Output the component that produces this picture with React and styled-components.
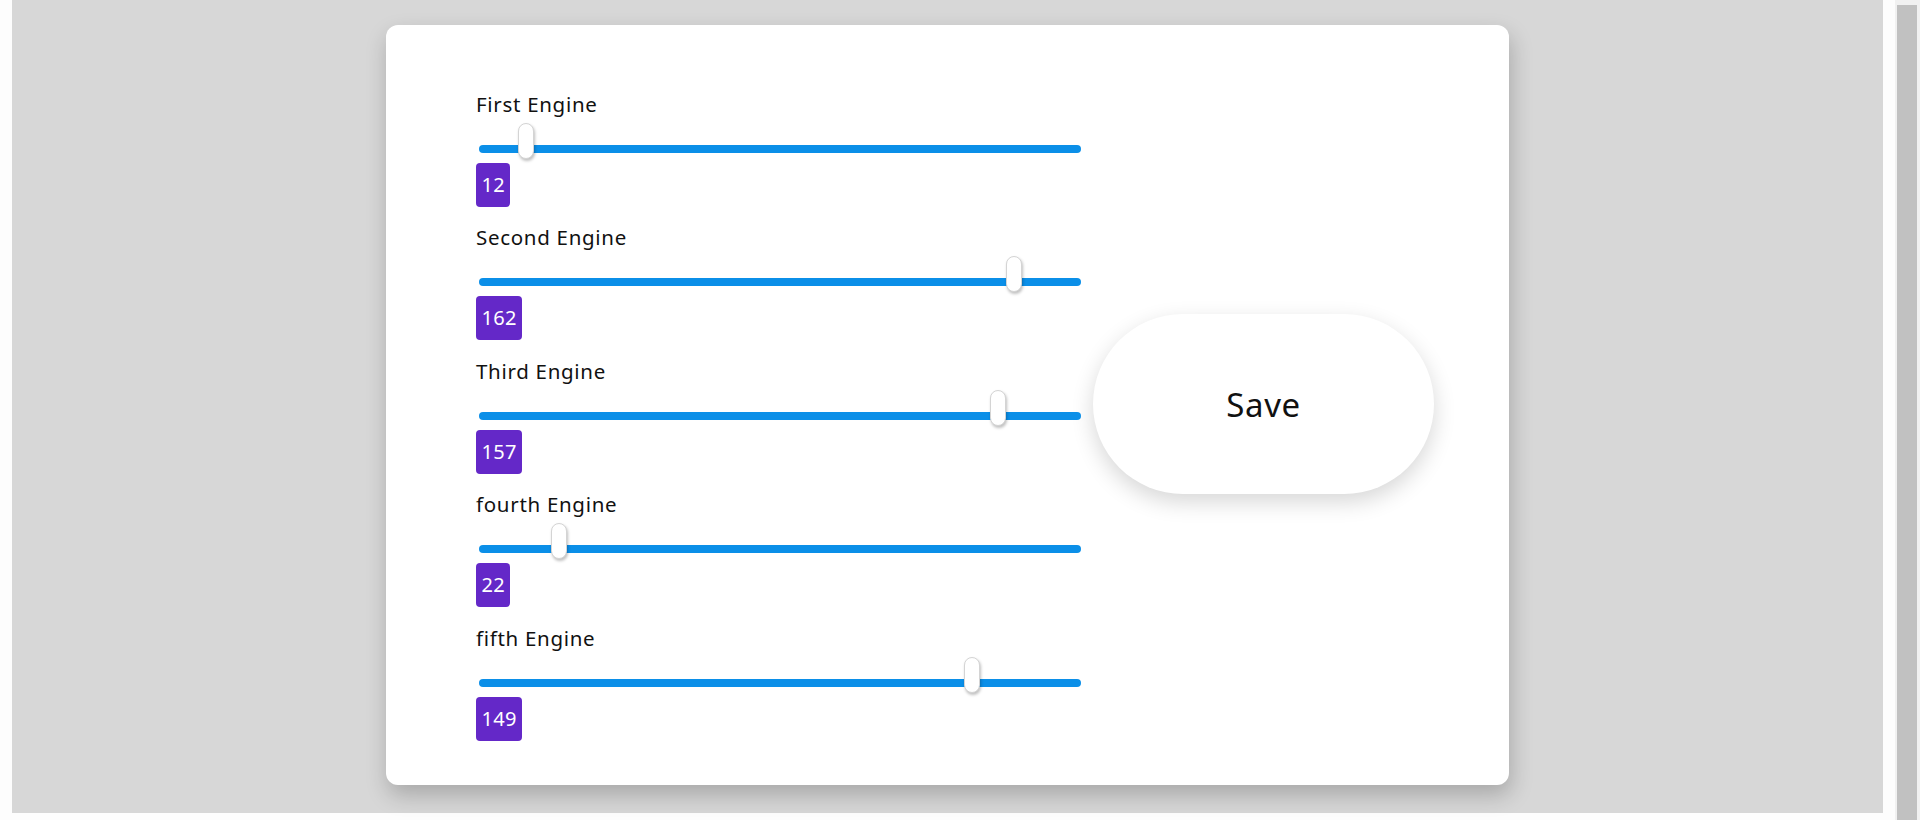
import React from "react";
import styled, { createGlobalStyle } from "styled-components";

// ------------------------ STYLES ------------------------

const GlobalStyle = createGlobalStyle`
  html, body {
    margin: 0;
    padding: 0;
    background: #fdfdfd;
    overflow: hidden;
  }
  * {
    box-sizing: border-box;
  }
`;

const Page = styled.div`
  display: flex;
  height: 820px;
  font-family: "Noto Sans", "Open Sans", sans-serif;
`;

const Stage = styled.main`
  margin-left: 12px;
  width: 1871px;
  height: 813px;
  background: #d7d7d7;
  display: flex;
  justify-content: center;
  align-items: flex-start;
  padding-top: 24.5px;
`;

const Card = styled.section`
  width: 1123px;
  background: #ffffff;
  border-radius: 12px;
  padding: 43px 75px 44px 90px;
  display: flex;
  align-items: flex-start;
  gap: 9px;
  box-shadow: 2px 10px 22px rgba(0, 0, 0, 0.22);
`;

const EngineList = styled.div`
  width: 608px;
  padding-top: 23px;
  display: flex;
  flex-direction: column;
  gap: 17.5px;
`;

const EngineRow = styled.div`
  display: flex;
  flex-direction: column;
  align-items: flex-start;
`;

const EngineLabel = styled.label`
  font-size: 20.5px;
  line-height: 26px;
  letter-spacing: 0.7px;
  color: #111;
`;

const SliderBox = styled.div`
  position: relative;
  align-self: stretch;
  height: 36px;
  margin: 6px 3px 0;
  padding-top: 22px;
`;

const Rail = styled.div`
  height: 8px;
  border-radius: 4px;
  background: #0b8fe8;
`;

const Thumb = styled.div`
  position: absolute;
  top: 0;
  width: 16px;
  height: 36px;
  border-radius: 8px;
  background: #fff;
  border: 1px solid #d4d4d4;
  box-shadow: 1px 2px 3px rgba(0, 0, 0, 0.25);
`;

const ValueBadge = styled.span`
  margin-top: 4px;
  height: 44px;
  line-height: 44px;
  padding: 0 5.5px;
  border-radius: 4px;
  background: #6428c8;
  color: #fff;
  font-size: 20px;
  letter-spacing: 0.3px;
`;

const SaveButton = styled.button`
  align-self: center;
  width: 341px;
  height: 180px;
  border: none;
  border-radius: 90px;
  background: #fff;
  color: #111;
  font-family: inherit;
  font-size: 33px;
  letter-spacing: 0.6px;
  cursor: pointer;
  box-shadow: 0 8px 22px rgba(0, 0, 0, 0.16);
`;

const ScrollTrack = styled.div`
  margin-left: 12px;
  width: 25px;
  height: 820px;
  background: #f1f1f1;
  padding: 5px 3px 0 2px;
`;

const ScrollThumb = styled.div`
  height: 100%;
  background: #c1c1c1;
`;

// ------------------------ DATA ------------------------

const MAX = 180;
const RAIL_FREE = 586; // rail width minus thumb width

const engines = [
  { label: "First Engine", value: 12 },
  { label: "Second Engine", value: 162 },
  { label: "Third Engine", value: 157 },
  { label: "fourth Engine", value: 22 },
  { label: "fifth Engine", value: 149 },
];

// ------------------------ COMPONENT ------------------------

const EngineSlider = ({ label, value }) => (
  <EngineRow>
    <EngineLabel>{label}</EngineLabel>
    <SliderBox>
      <Rail />
      <Thumb style={{ left: (RAIL_FREE * value) / MAX }} />
    </SliderBox>
    <ValueBadge>{value}</ValueBadge>
  </EngineRow>
);

const App = () => (
  <>
    <GlobalStyle />
    <Page>
      <Stage>
        <Card>
          <EngineList>
            {engines.map((e) => (
              <EngineSlider key={e.label} label={e.label} value={e.value} />
            ))}
          </EngineList>
          <SaveButton>Save</SaveButton>
        </Card>
      </Stage>
      <ScrollTrack>
        <ScrollThumb />
      </ScrollTrack>
    </Page>
  </>
);

export default App;
